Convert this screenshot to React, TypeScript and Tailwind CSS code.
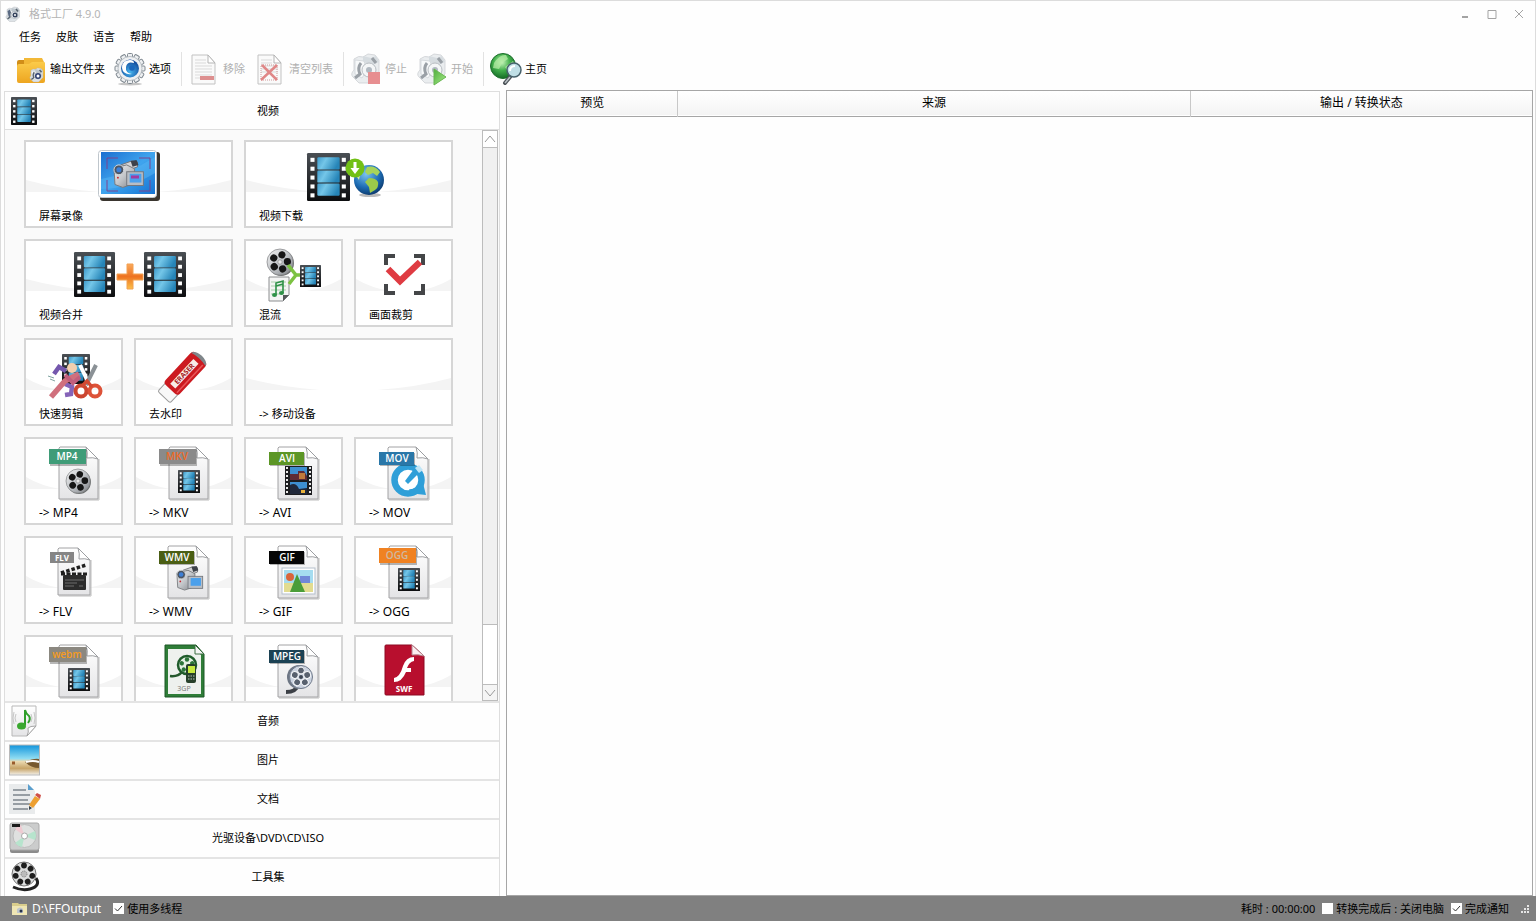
import { useRef, type ReactNode } from 'react';

type Size = { x: number; y: number; w: number; h: number };

function Defs() {
    return (
        <svg className="absolute h-0 w-0" aria-hidden="true">
            <defs>
                <linearGradient id="film" x1="0" y1="0" x2="1" y2="0.3">
                    <stop offset="0" stopColor="#3f9aca" />
                    <stop offset="0.4" stopColor="#74c6e8" />
                    <stop offset="1" stopColor="#2685b8" />
                </linearGradient>
                <linearGradient id="filmFrame" x1="0" y1="0" x2="0" y2="1">
                    <stop offset="0" stopColor="#4a4f54" />
                    <stop offset="1" stopColor="#0c0d0f" />
                </linearGradient>
                <linearGradient id="page" x1="0" y1="0" x2="0" y2="1">
                    <stop offset="0" stopColor="#ffffff" />
                    <stop offset="1" stopColor="#e4e4e6" />
                </linearGradient>
                <linearGradient id="metal" x1="0" y1="0" x2="1" y2="1">
                    <stop offset="0" stopColor="#f2f2f2" />
                    <stop offset="0.5" stopColor="#c2c5c9" />
                    <stop offset="1" stopColor="#7e8186" />
                </linearGradient>
                <linearGradient id="screen" x1="0" y1="0" x2="1" y2="1">
                    <stop offset="0" stopColor="#1b6fd0" />
                    <stop offset="0.5" stopColor="#3fa4ee" />
                    <stop offset="1" stopColor="#1673d2" />
                </linearGradient>
                <linearGradient id="orange" x1="0" y1="0" x2="0" y2="1">
                    <stop offset="0" stopColor="#f9a95c" />
                    <stop offset="0.5" stopColor="#ee7320" />
                    <stop offset="1" stopColor="#fbc04a" />
                </linearGradient>
                <linearGradient id="folder" x1="0" y1="0" x2="0" y2="1">
                    <stop offset="0" stopColor="#fbcb4a" />
                    <stop offset="1" stopColor="#eda520" />
                </linearGradient>
                <linearGradient id="sky" x1="0" y1="0" x2="0" y2="1">
                    <stop offset="0" stopColor="#1295dc" />
                    <stop offset="0.45" stopColor="#8fdcf2" />
                    <stop offset="0.55" stopColor="#ead9b0" />
                    <stop offset="0.78" stopColor="#c7a468" />
                    <stop offset="1" stopColor="#f3f0ea" />
                </linearGradient>
                <linearGradient id="play" x1="0" y1="0" x2="1" y2="1">
                    <stop offset="0" stopColor="#4fae3c" />
                    <stop offset="1" stopColor="#a9ec8c" />
                </linearGradient>
                <radialGradient id="earth" cx="0.4" cy="0.3" r="0.75">
                    <stop offset="0" stopColor="#7cc4ee" />
                    <stop offset="0.6" stopColor="#1d6cb4" />
                    <stop offset="1" stopColor="#0b3566" />
                </radialGradient>
                <radialGradient id="greenBall" cx="0.45" cy="0.35" r="0.65">
                    <stop offset="0" stopColor="#c8f5bc" />
                    <stop offset="0.5" stopColor="#43b04c" />
                    <stop offset="1" stopColor="#146b26" />
                </radialGradient>
                <radialGradient id="blueBall" cx="0.5" cy="0.7" r="0.7">
                    <stop offset="0" stopColor="#45b4ee" />
                    <stop offset="1" stopColor="#0e3f94" />
                </radialGradient>
            </defs>
        </svg>
    );
}

function Film({ x, y, w, h }: Size) {
    const holes = [0, 1, 2, 3, 4];
    const hole = h / 10;
    const step = h * 0.185;
    const frame = (h * 0.82) / 3;
    return (
        <g>
            <rect x={x} y={y} width={w} height={h} rx={h / 40} fill="url(#filmFrame)" />
            {holes.map((i) => (
                <g key={i} fill="#fff">
                    <rect x={x + w * 0.08} y={y + h * 0.1 + i * step} width={hole * 0.85} height={hole * 0.85} />
                    <rect x={x + w * 0.92 - hole} y={y + h * 0.1 + i * step} width={hole * 0.85} height={hole * 0.85} />
                </g>
            ))}
            {[0, 1, 2].map((i) => (
                <rect
                    key={i}
                    x={x + w * 0.24}
                    y={y + h * 0.09 + i * frame}
                    width={w * 0.52}
                    height={frame - h * 0.02}
                    rx={h / 40}
                    fill="url(#film)"
                />
            ))}
        </g>
    );
}

function Reel({ cx, cy, r }: { cx: number; cy: number; r: number }) {
    return (
        <g transform={`translate(${cx} ${cy}) scale(${r / 13})`}>
            <circle cx="1" cy="1" r="13" fill="#6d6f70" />
            <circle r="13" fill="url(#metal)" stroke="#8b8d8f" strokeWidth="0.8" />
            {[0, 72, 144, 216, 288].map((a) => (
                <circle key={a} cy="-7.4" r="3.6" fill="#161616" transform={`rotate(${a + 15})`} />
            ))}
            <circle r="2.2" fill="#e9e9e9" stroke="#888" strokeWidth="0.7" />
        </g>
    );
}

function Camcorder({ x, y, scale }: { x: number; y: number; scale: number }) {
    return (
        <g transform={`translate(${x} ${y}) scale(${scale})`}>
            <path d="M8 5 19 1l6 1v5l-11 4z" fill="#d4d4d6" stroke="#737478" />
            <path d="m18 1 6-1 2 5-6 2z" fill="#3d424a" />
            <path d="M1 8 14 5l8 4v15l-12 4-8-3z" fill="url(#metal)" stroke="#77797d" />
            <circle cx="6" cy="10" r="5" fill="#4c5664" stroke="#d5d7da" />
            <circle cx="6" cy="10" r="2.6" fill="#3d7fd6" />
            <path d="M16 12v14" stroke="#727579" />
            <rect x="14" y="12" width="17" height="14" fill="#b9bec5" stroke="#74777d" />
            <rect x="17" y="14" width="12" height="9" fill="#4ba0ec" />
            <circle cx="5" cy="18" r="1" fill="#c8262f" />
        </g>
    );
}

function Page({ left = 15, top = 3, width = 40, height = 52 }) {
    const r = left + width;
    const b = top + height;
    return (
        <g>
            <path d={`M${left + 1} ${b + 1}H${r + 1}V${top + 12}`} fill="none" stroke="#bdbdbd" />
            <path
                d={`M${left + 1} ${top}H${r - 12}L${r} ${top + 12}V${b}H${left}V${top + 1}z`}
                fill="url(#page)"
                stroke="#a2a2a4"
            />
            <path d={`M${r - 12} ${top}q2 6 1 11 6 -1 11 1z`} fill="#fff" stroke="#9c9ea1" />
        </g>
    );
}

interface BadgeProps {
    text: string;
    bg: string;
    color?: string;
    big?: boolean;
}

function Badge({ text, bg, color = '#fff', big }: BadgeProps) {
    return (
        <g>
            <rect x="7" y={big ? 6 : 9} width={big ? 37 : 35} height={big ? 16 : 13} fill="#000" opacity="0.28" />
            <rect x="6" y={big ? 5 : 8} width={big ? 37 : 35} height={big ? 15 : 13} fill={bg} />
            <text
                x="24"
                y={big ? 16 : 18}
                textAnchor="middle"
                fill={color}
                fontSize="10"
                fontWeight="600"
                fontFamily="'Open Sans', 'Noto Sans', sans-serif"
            >
                {text}
            </text>
        </g>
    );
}

function TileArt({ wide, children }: { wide?: boolean; children?: ReactNode }) {
    return (
        <svg
            width={wide ? 121 : 61}
            height="60"
            viewBox={wide ? '0 0 121 60' : '0 0 61 60'}
            className="relative"
            aria-hidden="true"
        >
            {children}
        </svg>
    );
}

interface BracketsProps {
    color: string;
    l: number;
    t: number;
    r: number;
    b: number;
    len: number;
    sw: number;
}

function Brackets({ color, l, t, r, b, len, sw }: BracketsProps) {
    return (
        <path
            d={`M${l + len} ${t}H${l}v${len}M${r - len} ${t}H${r}v${len}M${l} ${b - len}V${b}h${len}M${r} ${b - len}V${b}h${-len}`}
            fill="none"
            stroke={color}
            strokeWidth={sw}
        />
    );
}

interface Tile {
    name: string;
    label?: string;
    wide?: boolean;
    latin?: boolean;
    art?: ReactNode;
}

const tiles: Tile[] = [
    {
        name: 'record',
        label: '屏幕录像',
        wide: true,
        art: (
            <>
                <rect x="32" y="5" width="60" height="49" rx="3" fill="#3a352f" />
                <rect x="30.5" y="3.5" width="58" height="47" rx="3" fill="#fff" stroke="#bfc6cc" />
                <rect x="33" y="5" width="54" height="42" fill="url(#screen)" />
                <path d="M33 32q26-4 54-22v16q-26 16-54 16z" fill="#58b6f4" opacity="0.5" />
                <Brackets color="#7a4490" l={39} t={11} r={82} b={44} len={11} sw={1} />
                <Camcorder x={45} y={13} scale={0.98} />
                <path d="M63 30h8" stroke="#a13ca0" strokeWidth="3" />
            </>
        ),
    },
    {
        name: 'download',
        label: '视频下载',
        wide: true,
        art: (
            <>
                <Film x={19} y={6} w={43} h={48} />
                <ellipse cx="82" cy="48" rx="11" ry="2" fill="#bbb" />
                <circle cx="81" cy="33" r="15" fill="url(#earth)" />
                <path d="M79 20q8-2 13 5l-3 4-4-3-5 2-3-3z" fill="#a8d45a" />
                <path d="M81 31q7 0 9 4 1 5-3 8l-5 3-1-6-4-5z" fill="#9ccb4a" />
                <path d="m67 27 5 1-1 5z" fill="#cfe89a" />
                <circle cx="67" cy="21" r="9.5" fill="#72c015" />
                <path d="M65.5 15h3v6h3l-4.500 6-4.500-6h3z" fill="#fff" />
            </>
        ),
    },
    {
        name: 'join',
        label: '视频合并',
        wide: true,
        art: (
            <>
                <Film x={6} y={6} w={41} h={45} />
                <Film x={76} y={6} w={42} h={45} />
                <path
                    d="M59 18h6v10h10v6H65v9h-6v-9H49v-6h10z"
                    fill="url(#orange)"
                    stroke="#f3a050"
                    strokeLinejoin="round"
                />
            </>
        ),
    },
    {
        name: 'mux',
        label: '混流',
        art: (
            <>
                <Reel cx={17} cy={16} r={13} />
                <path d="M6 31h20v18l-6 6H6z" fill="#f4f4f4" stroke="#8c8e90" />
                <path d="M26 49h-6v6z" fill="#55585a" />
                <path d="M8 36h15M8 40h15M8 44h15M8 48h12" stroke="#a8d0aa" />
                <path d="M13 49V37l7-2v12M13 40l7-2" fill="none" stroke="#2f9148" strokeWidth="1.6" />
                <ellipse cx="11.5" cy="49" rx="2.5" ry="2" fill="#2f9148" />
                <ellipse cx="18.5" cy="47" rx="2.5" ry="2" fill="#2f9148" />
                <path d="m25 19 8 10 6 0M33 29l-7 9" fill="none" stroke="#7cc242" strokeWidth="3.5" />
                <Film x={37} y={19} w={21} h={22} />
            </>
        ),
    },
    {
        name: 'crop',
        label: '画面裁剪',
        art: (
            <>
                <Brackets color="#444648" l={13} t={10} r={50} b={47} len={9} sw={4} />
                <path d="m15 23 12 12 20-19" fill="none" stroke="#df3b42" strokeWidth="6.5" />
            </>
        ),
    },
    {
        name: 'cut',
        label: '快速剪辑',
        art: (
            <>
                <Film x={19} y={9} w={28} h={30} />
                <path d="m23 26-7-4-5 7" fill="none" stroke="#7457ad" strokeWidth="4.5" />
                <path d="m22 39 7 3-1 7-6 1" fill="none" stroke="#8563b8" strokeWidth="4.5" />
                <path d="m36 29-14 7-14 16" fill="none" stroke="#d0707d" strokeWidth="5.5" />
                <path d="m22 30 8 8 7-6" fill="none" stroke="#c25e7c" strokeWidth="4" />
                <circle cx="29" cy="23" r="5" fill="#f3cfae" />
                <path d="m5 31 6 2M7 34l5 2" stroke="#7fa3a0" />
                <path d="m37 20 10 21" stroke="#fff" strokeWidth="4" />
                <path d="m53 20-10 20" stroke="#8b9196" strokeWidth="4" />
                <circle cx="38" cy="46" r="5.500" fill="none" stroke="#cc4630" strokeWidth="4" />
                <circle cx="52" cy="46" r="5.500" fill="none" stroke="#dd5238" strokeWidth="4" />
                <path d="m39 41 5-5 5 6" fill="none" stroke="#d34a33" strokeWidth="3.5" />
            </>
        ),
    },
    {
        name: 'delogo',
        label: '去水印',
        art: (
            <g transform="rotate(-47 29 32)">
                <rect x="2" y="24" width="15" height="17" rx="2" fill="#f8f8f8" stroke="#9b9b9b" />
                <rect x="12" y="22" width="44" height="20" rx="4" fill="#cc1a20" />
                <path d="M53 22q5 2 5 10t-5 10q3-10 0-20z" fill="#7f868a" />
                <path d="M16 28h34v7H16z" fill="#f8ece8" />
                <path d="M14 39h38" stroke="#e8565a" strokeWidth="1.5" />
                <text
                    x="33"
                    y="34"
                    textAnchor="middle"
                    fontSize="7"
                    fontWeight="700"
                    fill="#a51a20"
                    fontFamily="'Open Sans', sans-serif"
                >
                    ERASER
                </text>
            </g>
        ),
    },
    { name: 'mobile', label: '-> 移动设备', wide: true },
    {
        name: 'mp4',
        label: '-> MP4',
        latin: true,
        art: (
            <>
                <Page left={16} width={39} />
                <Badge text="MP4" bg="#3f9c78" big />
                <Reel cx={35} cy={37} r={12} />
            </>
        ),
    },
    {
        name: 'mkv',
        label: '-> MKV',
        latin: true,
        art: (
            <>
                <Page left={16} width={39} />
                <Badge text="MKV" bg="#8a8a8a" color="#ee6a26" big />
                <Film x={25} y={26} w={22} h={23} />
            </>
        ),
    },
    {
        name: 'avi',
        label: '-> AVI',
        latin: true,
        art: (
            <>
                <Page />
                <Badge text="AVI" bg="#5c9626" />
                <rect x="22" y="22" width="27" height="29" fill="#1c1d20" />
                <path d="M24 23v28M47 23v28" stroke="#e8e8e8" strokeWidth="2" strokeDasharray="2 2" />
                <path d="M27 23h17v13H27zM27 38h17v12H27z" fill="#3e8fd0" />
                <path d="M27 30h8v-3h6l3 5v4H27z" fill="#5f2b34" />
                <path d="M36 29h6v6h-6z" fill="#c07a3c" />
                <path d="M27 41q6-3 9 4l8-1v6H27z" fill="#20283a" />
                <path d="M38 46h4v3h-4z" fill="#e7b13b" />
            </>
        ),
    },
    {
        name: 'mov',
        label: '-> MOV',
        latin: true,
        art: (
            <>
                <Page />
                <circle cx="35" cy="36" r="13.5" fill="#fff" stroke="#2f9fd8" strokeWidth="6.5" />
                <path d="M36 45q8 0 14-6l3 12-9-1-6 2z" fill="#2f9fd8" />
                <circle cx="35" cy="36" r="9.5" fill="#fff" />
                <path d="m32 37 9-12 5 4-11 11z" fill="#2f9fd8" />
                <path d="m42 24 4-3 4 5-4 3z" fill="#bfe5f7" />
                <Badge text="MOV" bg="#2a77a8" />
            </>
        ),
    },
    {
        name: 'flv',
        label: '-> FLV',
        latin: true,
        art: (
            <>
                <Page left={15} top={5} width={32} height={47} />
                <rect x="7" y="9" width="24" height="11" fill="#858585" />
                <text
                    x="19"
                    y="18"
                    textAnchor="middle"
                    fontSize="8"
                    fontWeight="700"
                    fill="#fff"
                    fontFamily="'Open Sans', sans-serif"
                >
                    FLV
                </text>
                <path d="m18 30 25-8" stroke="#1f1f1f" strokeWidth="3.5" strokeDasharray="3.5 2" />
                <path d="M18 31h26" stroke="#1f1f1f" strokeWidth="3" strokeDasharray="4 1.5" />
                <rect x="20" y="32" width="23" height="15" rx="1" fill="#2c2c2c" />
                <path d="M22 37h19M22 40h12M22 43h9M36 43h4" stroke="#8a8a8a" strokeWidth="0.7" />
            </>
        ),
    },
    {
        name: 'wmv',
        label: '-> WMV',
        latin: true,
        art: (
            <>
                <Page />
                <Badge text="WMV" bg="#4a5e14" />
                <Camcorder x={23} y={23} scale={0.86} />
            </>
        ),
    },
    {
        name: 'gif',
        label: '-> GIF',
        latin: true,
        art: (
            <>
                <Page />
                <Badge text="GIF" bg="#060606" />
                <rect x="19" y="25" width="33" height="26" fill="#fff" stroke="#b5bfcb" />
                <rect x="21" y="27" width="29" height="22" fill="#a5dcf0" />
                <path d="M21 40h29v9H21z" fill="#e2dc90" />
                <rect x="37" y="33" width="10" height="7" fill="#7188d8" />
                <path d="m34 31 8 18H27z" fill="#4a9d38" />
                <circle cx="27" cy="34" r="4" fill="#d9653b" />
            </>
        ),
    },
    {
        name: 'ogg',
        label: '-> OGG',
        latin: true,
        art: (
            <>
                <Page left={16} width={39} />
                <Badge text="OGG" bg="#f08222" color="#cfb9a0" big />
                <Film x={25} y={25} w={22} h={23} />
            </>
        ),
    },
    {
        name: 'webm',
        art: (
            <>
                <Page left={16} width={39} />
                <Badge text="webm" bg="#8b8880" color="#f59b20" big />
                <Film x={25} y={26} w={22} h={23} />
            </>
        ),
    },
    {
        name: '3gp',
        art: (
            <>
                <path d="M12 3h31l8 9v43H12z" fill="#2f7d38" stroke="#1d5826" />
                <path d="M15 7h27l6 6v39H15z" fill="#eef1ee" />
                <path d="M42 3v9h9z" fill="#f5f5f5" stroke="#3c6e42" />
                <circle cx="34" cy="23" r="9" fill="#e4efe4" stroke="#1f5c2b" strokeWidth="2.5" />
                {[0, 72, 144, 216, 288].map((a) => (
                    <circle key={a} cx="34" cy="17.5" r="2.2" fill="#2b7438" transform={`rotate(${a} 34 23)`} />
                ))}
                <path d="M17 34q8 1 12-4" fill="none" stroke="#25582d" strokeWidth="2.5" />
                <rect x="33" y="22" width="10" height="19" rx="2" fill="#27402b" />
                <rect x="35" y="24" width="7" height="7" fill="#c6ea3e" />
                <path d="M35 34h7M35 37h7" stroke="#b8c2b8" strokeDasharray="1.5 1" />
                <text x="31" y="49" textAnchor="middle" fontSize="7" fill="#777" fontFamily="'Open Sans', sans-serif">
                    3GP
                </text>
            </>
        ),
    },
    {
        name: 'mpeg',
        art: (
            <>
                <Page />
                <Badge text="MPEG" bg="#1c4254" />
                <path d="M23 50q10 0 12-7" fill="none" stroke="#3c4046" strokeWidth="4" />
                <circle cx="36" cy="35" r="12" fill="#6d7684" />
                <circle cx="38" cy="35" r="11.5" fill="#cbd3e0" stroke="#717b8b" />
                {[0, 72, 144, 216, 288].map((a) => (
                    <circle
                        key={a}
                        cx="38"
                        cy="28.5"
                        r="3.4"
                        fill="#58616f"
                        stroke="#f5f7fa"
                        transform={`rotate(${a} 38 35)`}
                    />
                ))}
                <circle cx="38" cy="35" r="2" fill="#3d4654" />
            </>
        ),
    },
    {
        name: 'swf',
        art: (
            <>
                <path d="M13 3h26l12 11v39H13q-1 0-1-1V4q0-1 1-1z" fill="#b80f2e" stroke="#8d0b22" />
                <path d="M39 3v10q6-1 12 1z" fill="#fbeef0" stroke="#b5878f" />
                <path d="M41 15q-8 0-11 9-3 11-9 12v4q8 0 12-10h5v-4h-4q2-6 7-7z" fill="#fff" />
                <text
                    x="31"
                    y="50"
                    textAnchor="middle"
                    fontSize="8"
                    fontWeight="700"
                    fill="#fff"
                    fontFamily="'Open Sans', sans-serif"
                >
                    SWF
                </text>
            </>
        ),
    },
];

function TileCard({ name, label, wide, latin, art }: Tile) {
    return (
        <button
            aria-label={label ?? name}
            className={`relative flex h-[88px] flex-col items-center border-2 border-[#d6d6d6] bg-white pt-[5px] ${
                wide ? 'col-span-2' : ''
            }`}
        >
            <svg
                className="absolute inset-0 h-full w-full"
                viewBox="0 0 100 84"
                preserveAspectRatio="none"
                aria-hidden="true"
            >
                <path d="M0 38Q16 47 36 50H0zM100 38Q84 47 64 50h36z" fill="#f4f4f4" />
            </svg>
            <TileArt wide={wide}>{art}</TileArt>
            {label && (
                <span className={`relative w-full pl-[13px] text-left leading-[18px] ${latin ? 'text-xs leading-[18px]' : ''}`}>
                    {label}
                </span>
            )}
        </button>
    );
}

function RowIcon({ children }: { children: ReactNode }) {
    return (
        <svg className="h-8 w-8 shrink-0" viewBox="0 0 32 32" aria-hidden="true">
            {children}
        </svg>
    );
}

const sections = [
    {
        label: '音频',
        icon: (
            <>
                <path d="M3 1h24v20l-9 10H3z" fill="url(#page)" stroke="#b8b8b8" />
                <path d="M27 21q-6 0-8 2 1 4-1 8z" fill="#fff" stroke="#a6a6a6" />
                <path d="M16 20V5q1 4 4 6 2 3-1 7" fill="none" stroke="#2f9f2a" strokeWidth="2" />
                <ellipse cx="12.5" cy="21" rx="4.5" ry="3.5" fill="#3aa82f" />
                <path d="M7 9q-2 4 0 8M5 7q-2 6 0 12M22 9q2 4 0 8M25 7q2 6 0 12" fill="none" stroke="#c6c6c6" />
            </>
        ),
    },
    {
        label: '图片',
        icon: (
            <>
                <rect x="0.5" y="1" width="30" height="30" fill="url(#sky)" stroke="#b9b9b9" />
                <path d="M16 18q9-4 14-3v9q-8 0-14-6z" fill="#77592f" />
                <path d="M17 18q7-2 13 0" fill="none" stroke="#fff" strokeWidth="2" />
                <path d="M3 19h3" stroke="#995c2c" strokeWidth="3" />
            </>
        ),
    },
    {
        label: '文档',
        icon: (
            <>
                <path d="M0 1h19l7 7v23H0z" fill="#e9ebec" />
                <path d="m19 1 6 6h-6z" fill="#5b9fce" />
                <path d="M4 7h13M4 12h17M4 17h15M4 21h17M4 26h15" stroke="#7c858c" strokeWidth="1.5" />
                <path d="m26 13 5 3-7 9-4-3z" fill="#eda032" />
                <path d="m26 12 2-2 4 2-1 4z" fill="#cf5048" />
                <path d="m20 23 3 2-3 2z" fill="#35404a" />
            </>
        ),
    },
    {
        label: '光驱设备\\DVD\\CD\\ISO',
        icon: (
            <>
                <rect x="1" y="2" width="29" height="29" rx="2" fill="#8b8b8b" />
                <rect x="1" y="1" width="29" height="27" rx="2" fill="#cbcccc" stroke="#aaa" />
                <circle cx="15.5" cy="14" r="11.5" fill="#dfe1e0" stroke="#bcbcbc" />
                <path d="M15.5 14 6 7a11 11 0 0 1 6-4z" fill="#eecbd2" />
                <path d="M15.5 14 26 9a11 11 0 0 1 0 9zM15.5 14 6 21a11 11 0 0 0 7 4z" fill="#b7e4cd" />
                <circle cx="15.5" cy="14" r="3" fill="#fff" stroke="#a9a9a9" />
                <rect x="3" y="2" width="8" height="3" fill="#1b1b1b" />
            </>
        ),
    },
    {
        label: '工具集',
        icon: (
            <>
                <path d="M27 17q5 8-6 11-8 2-17-2" fill="none" stroke="#222" strokeWidth="3" />
                <circle cx="15" cy="13" r="12" fill="#dcdddd" stroke="#777" />
                {[0, 51, 103, 154, 206, 257, 309].map((a) => (
                    <circle key={a} cx="15" cy="4.5" r="2.9" fill="#1e1e1e" transform={`rotate(${a} 15 13)`} />
                ))}
                <circle cx="15" cy="13" r="3" fill="#bbb" stroke="#777" strokeDasharray="1 1" />
            </>
        ),
    },
];

// The machine block used by the app logo, stop and start
function Machine() {
    return (
        <g>
            <path
                d="M3 25q-3-3 1-7V7q5-4 9-2l5-3 7 1 4 5v14l-9 9H9z"
                fill="#dde2e6"
                stroke="#aeb4b9"
                strokeWidth="0.8"
            />
            <path d="m5 8 9 1 3 9-5 8-7-4z" fill="#f4f6f8" stroke="#b3bac0" strokeWidth="0.8" />
            <path d="m13 4 8 2 5-2 3 6-9 4-7-5z" fill="#bdc6cd" />
            <path d="M11 11q-4 5-1 11l-5 4M22 6l4 5" fill="none" stroke="#58636d" strokeWidth="3" />
            <circle cx="19" cy="18" r="7" fill="#eef1f4" stroke="#8a939a" />
            <circle cx="19" cy="18" r="3" fill="#7d8b98" />
        </g>
    );
}

function LinedPage() {
    return (
        <g>
            <path d="M4 3h16l7 8v21H4z" fill="#fafafa" stroke="#c2c2c2" />
            <path d="M20 3v8h7z" fill="#fff" stroke="#b5b5b5" />
            <path d="M7 8h11M7 11h11M7 14h17M7 17h17M7 20h17" stroke="#d9d9d9" />
        </g>
    );
}

interface Tool {
    label: string;
    disabled?: boolean;
    icon: ReactNode;
}

const toolGroups: Tool[][] = [
    [
        {
            label: '输出文件夹',
            icon: (
                <>
                    <path d="M2 10q0-2 2-2h8l3 3h13q2 0 2 2v15H2z" fill="#d18e18" />
                    <path d="M9 6h18l3 6H9z" fill="#f2b837" />
                    <path
                        d="M2 14q0-2 2-2h10l3-2h12q1 0 1 2v17q0 2-2 2H4q-2 0-2-2z"
                        fill="url(#folder)"
                    />
                    <g transform="translate(14 15) scale(0.48)">
                        <Machine />
                    </g>
                    <circle cx="23" cy="24" r="3" fill="#2c3d70" />
                    <circle cx="23" cy="24" r="1.5" fill="#fff" />
                </>
            ),
        },
        {
            label: '选项',
            icon: (
                <>
                    <ellipse cx="16" cy="32" rx="12" ry="1.5" fill="#c4c4c4" />
                    {[0, 30, 60, 90, 120, 150, 180, 210, 240, 270, 300, 330].map((a) => (
                        <rect
                            key={a}
                            x="13.5"
                            y="1.5"
                            width="5"
                            height="5"
                            rx="1"
                            fill="#eef0f2"
                            stroke="#7f8890"
                            transform={`rotate(${a} 16 16.5)`}
                        />
                    ))}
                    <circle cx="16" cy="16.5" r="12" fill="#eef0f2" stroke="#a9b1b8" strokeWidth="0.8" />
                    <circle cx="16" cy="16.5" r="9" fill="url(#blueBall)" />
                    <path d="M20 11q-7-2-8 4-1 6 6 7-9 1-10-6 0-8 8-8 4 0 4 3z" fill="#fff" />
                    <circle cx="18" cy="16" r="2.8" fill="#1c66bb" />
                </>
            ),
        },
    ],
    [
        {
            label: '移除',
            disabled: true,
            icon: (
                <>
                    <LinedPage />
                    <path d="M7 23h17M7 26h17" stroke="#ddd" />
                    <rect x="12" y="24" width="14" height="4" fill="#dd8f8f" />
                </>
            ),
        },
        {
            label: '清空列表',
            disabled: true,
            icon: (
                <>
                    <LinedPage />
                    <rect x="7" y="13" width="16" height="15" fill="none" stroke="#cf9a9a" strokeDasharray="1 1" />
                    <path d="m8 13 15 15M23 13 7 28" stroke="#e08787" strokeWidth="2.5" />
                </>
            ),
        },
    ],
    [
        {
            label: '停止',
            disabled: true,
            icon: (
                <>
                    <g opacity="0.6">
                        <Machine />
                    </g>
                    <rect x="18" y="20" width="12" height="12" fill="#e78e90" />
                </>
            ),
        },
        {
            label: '开始',
            disabled: true,
            icon: (
                <>
                    <g opacity="0.6">
                        <Machine />
                    </g>
                    <path d="M18 17v16l12-8z" fill="url(#play)" stroke="#69b652" />
                </>
            ),
        },
    ],
    [
        {
            label: '主页',
            icon: (
                <>
                    <circle cx="13" cy="14" r="12.5" fill="url(#greenBall)" stroke="#1d6e2c" />
                    <path
                        d="M4 11q6-9 12-8l2 4-6 4-3 6-6-1zM15 15l8-6 3 6-6 8z"
                        fill="#b4eba4"
                        opacity="0.75"
                    />
                    <path d="m20 25-5 6" stroke="#4c5358" strokeWidth="4" strokeLinecap="round" />
                    <path d="m20 25-5 6" stroke="#b9c0c4" strokeWidth="1.5" />
                    <circle cx="24" cy="18" r="7" fill="#c0dfe6" stroke="#47616b" strokeWidth="1.5" />
                    <path d="M20 19q0-5 5-5" fill="none" stroke="#fff" strokeWidth="2" />
                </>
            ),
        },
    ],
];

function TitleBar() {
    return (
        <header className="flex h-[25px] items-center justify-between pr-[10px] pl-1">
            <div className="flex items-center gap-2 text-[#b4b4b4]">
                <svg className="h-4 w-4" viewBox="0 0 32 32" aria-hidden="true">
                    <Machine />
                    <circle cx="20" cy="18" r="5" fill="#34425c" />
                    <circle cx="20" cy="18" r="2" fill="#fff" />
                    <path d="m5 10 5-3 1 9-3 8" fill="#5a6a83" />
                </svg>
                <h1>格式工厂 4.9.0</h1>
            </div>
            <div className="flex items-center gap-[15px] text-[#a3a3a3]">
                {[
                    { name: '最小化', d: 'M3 9h6', w: 2 },
                    { name: '最大化', d: 'M2 2.500h8v8h-8z', w: 1 },
                    { name: '关闭', d: 'm2 2 8 8M10 2l-8 8', w: 1 },
                ].map(({ name, d, w }) => (
                    <button key={name} aria-label={name}>
                        <svg className="h-3 w-3" viewBox="0 0 12 12" fill="none" stroke="currentColor" strokeWidth={w}>
                            <path d={d} />
                        </svg>
                    </button>
                ))}
            </div>
        </header>
    );
}

function Toolbar() {
    return (
        <div className="flex h-[43px] items-center pl-[14px]">
            {toolGroups.map((group, i) => (
                <div
                    key={i}
                    className={`flex items-center gap-[9px] pr-[10px] ${i > 0 ? 'border-l border-[#e2e2e2] pl-[6px]' : ''}`}
                >
                    {group.map(({ label, disabled, icon }) => (
                        <button
                            key={label}
                            disabled={disabled}
                            className="flex items-center gap-[3px] disabled:text-[#b0b0b0]"
                        >
                            <svg className="h-[34px] w-8" viewBox="0 0 32 34" aria-hidden="true">
                                {icon}
                            </svg>
                            <span>{label}</span>
                        </button>
                    ))}
                </div>
            ))}
        </div>
    );
}

function SidePanel() {
    const listRef = useRef<HTMLDivElement>(null);
    const scroll = (top: number) => listRef.current?.scrollBy({ top });

    return (
        <aside className="mt-px ml-[3px] flex w-[496px] shrink-0 flex-col border border-b-0 border-[#dedede]">
            <button className="flex h-[38px] shrink-0 items-center border-b border-[#dedede] pr-1 pl-1">
                <RowIcon>
                    <Film x={2} y={2} w={26} h={28} />
                </RowIcon>
                <span className="flex-1">视频</span>
            </button>
            <div className="flex min-h-0 flex-1 bg-[#fafafa]">
                <div ref={listRef} className="min-h-0 flex-1 overflow-hidden pt-[10px] pr-[29px] pl-[19px]">
                    <div className="grid grid-cols-4 gap-[11px]">
                        {tiles.map((tile) => (
                            <TileCard key={tile.name} {...tile} />
                        ))}
                    </div>
                </div>
                <div className="mr-px flex w-4 flex-col border border-[#bcbcbc] bg-white text-[#9a9a9a]">
                    <button
                        aria-label="向上"
                        className="flex h-4 shrink-0 items-center justify-center"
                        onClick={() => scroll(-99)}
                    >
                        <svg className="h-3 w-3" viewBox="0 0 12 12" fill="none" stroke="currentColor">
                            <path d="m1 9 5-6 5 6" />
                        </svg>
                    </button>
                    <div className="flex-[8] border-y border-[#bcbcbc] bg-[#f0f0f0]" />
                    <div className="flex-1" />
                    <button
                        aria-label="向下"
                        className="flex h-4 shrink-0 items-center justify-center border-t border-[#bcbcbc] bg-[#f5f5f5]"
                        onClick={() => scroll(99)}
                    >
                        <svg className="h-3 w-3" viewBox="0 0 12 12" fill="none" stroke="currentColor">
                            <path d="m1 3 5 6 5-6" />
                        </svg>
                    </button>
                </div>
            </div>
            {sections.map(({ label, icon }) => (
                <button
                    key={label}
                    className="flex h-[39px] shrink-0 items-center border-t-2 border-[#e4e4e4] pr-1 pb-[2px] pl-1"
                >
                    <RowIcon>{icon}</RowIcon>
                    <span className="flex-1">{label}</span>
                </button>
            ))}
        </aside>
    );
}

function TaskTable() {
    return (
        <main className="mr-[2px] ml-[6px] flex-1 border border-[#a6a6a6]">
            <table className="w-full table-fixed border-collapse text-xs">
                <thead>
                    <tr className="h-[25px] border-b border-[#a6a6a6] bg-linear-to-b from-white to-[#f4f4f4]">
                        <th className="w-1/6 border-r border-[#c8c8c8] font-normal">预览</th>
                        <th className="w-1/2 border-r border-[#c8c8c8] font-normal">来源</th>
                        <th className="w-1/3 font-normal">输出 / 转换状态</th>
                    </tr>
                </thead>
                <tbody />
            </table>
        </main>
    );
}

function CheckItem({ label, checked }: { label: string; checked?: boolean }) {
    return (
        <label className="flex items-center gap-[3px]">
            <span className="relative flex">
                <input
                    type="checkbox"
                    defaultChecked={checked}
                    className="peer h-[11px] w-[11px] appearance-none bg-white"
                />
                <svg
                    className="pointer-events-none absolute inset-0 hidden h-[11px] w-[11px] peer-checked:block"
                    viewBox="0 0 11 11"
                    fill="none"
                    stroke="#333"
                    aria-hidden="true"
                >
                    <path d="m2 5.500 2.500 2.500L9 3" />
                </svg>
            </span>
            {label}
        </label>
    );
}

function StatusBar() {
    return (
        <footer className="flex h-[25px] shrink-0 items-center justify-between bg-[#808080] pr-[6px] pl-3">
            <div className="flex items-center gap-3">
                <button className="flex items-center gap-1 text-white">
                    <svg className="h-4 w-4" viewBox="0 0 16 16" aria-hidden="true">
                        <path d="M0 2h6l1 1h8v11H0z" fill="#d9cd8c" />
                        <path d="M0 5h15v9H0z" fill="#efe6b4" />
                        <path d="M5 8q3-3 6 0v4H5z" fill="#bfc6cc" />
                        <circle cx="9" cy="10" r="1.5" fill="#26324a" />
                    </svg>
                    <span className="text-xs">D:\FFOutput</span>
                </button>
                <CheckItem label="使用多线程" checked />
            </div>
            <div className="flex items-center gap-[7px]">
                <span>耗时 : 00:00:00</span>
                <CheckItem label="转换完成后 : 关闭电脑" />
                <CheckItem label="完成通知" checked />
                <svg className="ml-1 h-[10px] w-[10px]" viewBox="0 0 10 10" fill="#e6e6e6" aria-hidden="true">
                    <path d="M7 1h2v2H7zM7 4h2v2H7zM4 4h2v2H4zM7 7h2v2H7zM4 7h2v2H4zM1 7h2v2H1z" />
                </svg>
            </div>
        </footer>
    );
}

export default function App() {
    return (
        <div className="flex h-screen flex-col bg-[#fefefe] font-['Noto_Sans','Noto_Sans_CJK_SC',sans-serif] text-[11px] leading-4 text-black">
            <Defs />
            <div className="flex min-h-0 flex-1 flex-col border-x border-t border-[#dcdcdc]">
                <TitleBar />
                <nav className="flex h-[21px] items-center gap-[15px] pl-[18px]">
                    {['任务', '皮肤', '语言', '帮助'].map((item) => (
                        <button key={item}>{item}</button>
                    ))}
                </nav>
                <Toolbar />
                <div className="flex min-h-0 flex-1">
                    <SidePanel />
                    <TaskTable />
                </div>
            </div>
            <StatusBar />
        </div>
    );
}
